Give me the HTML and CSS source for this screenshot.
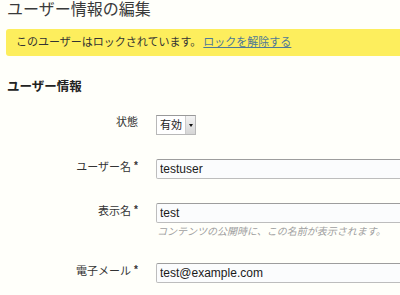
FILE: index.html
```html
<!DOCTYPE html>
<html lang="ja">
<head>
<meta charset="utf-8">
<title>ユーザー情報の編集</title>
<link rel="stylesheet" href="styles.css">
</head>
<body>
<div class="page">
  <h1 class="title">ユーザー情報の編集</h1>
  <div class="notice">このユーザーはロックされています。<a class="notice-link" href="#">ロックを解除する</a></div>
  <h2 class="section">ユーザー情報</h2>
  <div class="form">
    <div class="row">
      <div class="label">状態</div>
      <div class="field">
        <div class="select"><span class="select-text">有効</span><span class="select-btn"><span class="arrow"></span></span></div>
      </div>
    </div>
    <div class="row">
      <div class="label">ユーザー名<span class="req">*</span></div>
      <div class="field"><input class="input" type="text" value="testuser"></div>
    </div>
    <div class="row">
      <div class="label">表示名<span class="req">*</span></div>
      <div class="field">
        <input class="input" type="text" value="test">
        <div class="hint">コンテンツの公開時に、この名前が表示されます。</div>
      </div>
    </div>
    <div class="row">
      <div class="label">電子メール<span class="req">*</span></div>
      <div class="field"><input class="input" type="text" value="test@example.com"></div>
    </div>
  </div>
</div>
</body>
</html>
```
FILE: styles.css
```css
html, body {
  margin: 0;
  padding: 0;
  background: #fffffa;
  overflow: hidden;
}
body {
  font-family: "Liberation Sans", "Noto Sans CJK JP", sans-serif;
  color: #333;
}
.page {
  padding-left: 6px;
  width: 394px;
  overflow: hidden;
}
.title {
  margin: 0;
  padding-left: 1px;
  font-size: 16px;
  line-height: 20px;
  font-weight: normal;
  color: #3a3a3a;
}
.notice {
  margin-top: 9px;
  margin-right: -10px;
  height: 27px;
  line-height: 27px;
  padding-left: 10px;
  background: #fdee5d;
  border-radius: 3px;
  font-size: 11px;
  color: #333;
}
.notice-link {
  margin-left: 2px;
  color: #4f7896;
  text-decoration: underline;
}
.section {
  margin: 23px 0 0 1px;
  font-size: 12.5px;
  line-height: 16px;
  font-weight: bold;
  color: #222;
}
.form {
  margin-top: 20px;
  display: flex;
  flex-direction: column;
  gap: 24px;
}
.row {
  display: flex;
  align-items: flex-start;
  gap: 18px;
}
.label {
  flex: none;
  width: 132px;
  text-align: right;
  font-size: 11px;
  line-height: 14px;
  color: #333;
}
.req {
  font-size: 10px;
  font-weight: bold;
  margin-left: 3px;
  vertical-align: 2px;
}
.field {
  display: flex;
  flex-direction: column;
  flex: 1;
  min-width: 0;
}
.select {
  display: flex;
  width: 40px;
  height: 20px;
  border: 1px solid #b8b8b8;
  border-top-color: #999;
  background: #fff;
  box-sizing: border-box;
}
.select-text {
  flex: 1;
  font-size: 11px;
  line-height: 18px;
  padding-left: 3px;
  color: #222;
}
.select-btn {
  width: 9px;
  border-left: 1px solid #ccc;
  background: linear-gradient(#f4f4f4, #d6d6d6);
  display: flex;
  align-items: center;
  justify-content: center;
}
.arrow {
  width: 0;
  height: 0;
  border-left: 2.5px solid transparent;
  border-right: 2.5px solid transparent;
  border-top: 3px solid #111;
}
.input {
  width: calc(100% + 10px);
  height: 20px;
  box-sizing: border-box;
  margin: 0;
  padding: 0 3px;
  border: 1px solid #bdbdbd;
  border-top-color: #9d9d9d;
  border-radius: 2px;
  background: #fbfcfd;
  font-family: "Liberation Sans", "Noto Sans CJK JP", sans-serif;
  font-size: 12px;
  color: #1a1a1a;
  outline: none;
}
.hint {
  margin-top: 2px;
  padding-left: 1px;
  font-size: 10px;
  line-height: 14px;
  font-style: italic;
  color: #a0a0a0;
  white-space: nowrap;
}
```
